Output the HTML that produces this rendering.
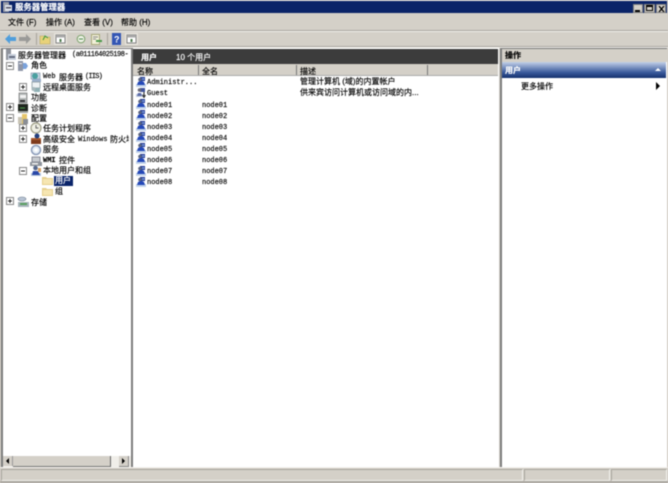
<!DOCTYPE html>
<html><head><meta charset="utf-8"><style>
*{box-sizing:border-box}
html{background:#d4d0c8}
html,body{margin:0;padding:0;width:668px;height:483px;overflow:hidden}
body{position:relative;background:#d4d0c8;font-family:"Liberation Sans","Noto Sans CJK SC",sans-serif;font-size:8px;color:#000;filter:blur(.45px)}
.a{position:absolute}
.t{position:absolute;white-space:nowrap;line-height:11px;height:11px;-webkit-text-stroke:.15px currentColor}
.m{font-family:"Liberation Mono","Noto Sans CJK SC",monospace;font-size:7px}
.c{font-size:8px}
svg{position:absolute;display:block}
</style></head><body>
<svg width="0" height="0" style="left:0;top:0"><defs>
<symbol id="u" viewBox="0 0 11 11"><rect x="4" y="1" width="5" height="4" fill="#1f3590"/><rect x="6" y="2" width="2.500000" height="2" fill="#6f8fd0"/><rect x="0" y="8" width="10" height="3" fill="#c3d4ea"/><path d="M1 9l1-3 2-1h2l2 1 1 3z" fill="#2448b8"/><circle cx="4" cy="3.500000" r="1.800000" fill="#5a6480"/></symbol>
<symbol id="g" viewBox="0 0 11 11"><rect x="4" y="1" width="5" height="4" fill="#41549c"/><rect x="0" y="7" width="8" height="3" fill="#c4cfe2"/><circle cx="3.500000" cy="3" r="1.800000" fill="#6a6a78"/><path d="M1 9l1-3h3l1 3z" fill="#5a6aa8"/><path d="M8 5v4M6.500000 8l1.500000 2.500000L9.500000 8" stroke="#222" fill="none"/></symbol>
<symbol id="f" viewBox="0 0 11 9"><path d="M0 1h4l1 1h6v7H0z" fill="#e6cf8c"/><path d="M1 3h9v5H1z" fill="#f6e6b2"/></symbol>
<symbol id="p" viewBox="0 0 8 8"><rect x=".5" y=".5" width="7" height="7" fill="#fff" stroke="#888"/><path d="M2 4h4M4 2v4" stroke="#222"/></symbol>
<symbol id="n" viewBox="0 0 8 8"><rect x=".5" y=".5" width="7" height="7" fill="#fff" stroke="#888"/><path d="M2 4h4" stroke="#222"/></symbol>
<symbol id="w" viewBox="0 0 13 12"><rect x="0" y="0" width="13" height="12" fill="#e6e3dc"/><rect x="2" y="2" width="9" height="8" fill="#fff" stroke="#808080"/><rect x="2" y="2" width="9" height="2.500000" fill="#a8a8a8"/><rect x="5.500000" y="6" width="2" height="3" fill="#4e7a4e"/></symbol>
</defs></svg>

<!-- title bar -->
<div class="a" style="left:0;top:0;width:668px;height:1px;background:#e8e6e0"></div>
<div class="a" style="left:1px;top:1px;width:666px;height:12px;background:#0b2468"></div>
<svg style="left:3px;top:2px" width="9" height="10"><rect x="0" y="0" width="6" height="10" fill="#9a9ea8"/><rect x="2" y="3" width="7" height="6" fill="#dfe4ec"/><rect x="3" y="5" width="5" height="1.500000" fill="#556"/></svg>
<div class="t" style="left:15px;top:2px;color:#fff;font-size:8.4px;font-weight:bold">服务器管理器</div>
<div class="a" style="left:633px;top:4px;width:10px;height:9px;background:#d4d0c8;border:1px solid #808080"><div class="a" style="left:1px;bottom:0;width:5px;height:2px;background:#000"></div></div>
<div class="a" style="left:644px;top:4px;width:11px;height:9px;background:#d4d0c8;border:1px solid #808080"><div class="a" style="left:1px;top:0;width:7px;height:6px;border:1px solid #000;border-top-width:2px"></div></div>
<div class="a" style="left:656px;top:4px;width:10px;height:9px;background:#d4d0c8;border:1px solid #808080"><svg style="left:1px;top:1px" width="7" height="6"><path d="M1 0l5 6M6 0L1 6" stroke="#000" stroke-width="1.300000"/></svg></div>

<!-- menu -->
<div class="t c" style="left:8px;top:17px">文件 (F)</div>
<div class="t c" style="left:46px;top:17px">操作 (A)</div>
<div class="t c" style="left:84px;top:17px">查看 (V)</div>
<div class="t c" style="left:121px;top:17px">帮助 (H)</div>
<div class="a" style="left:0;top:30px;width:668px;height:1px;background:#a9a69f"></div>
<div class="a" style="left:0;top:31px;width:668px;height:1px;background:#f2f0ec"></div>

<!-- toolbar -->
<svg style="left:4px;top:32px" width="140" height="14">
<path d="M1 7l5-5v3h6v4H6v3z" fill="#4f9edc"/>
<path d="M27 7l-5-5v3h-7v4h7v3z" fill="#9a9a98"/>
<path d="M32.500000 1v12M103.500000 1v12" stroke="#a8a49c"/>
<path d="M36 4h4l1 1h5v7H36z" fill="#e8d27a" stroke="#b8a860" stroke-width=".6"/>
<path d="M39 8l2-4 3 2" stroke="#3a9a3a" fill="none"/>
<use href="#w" x="50" y="1" width="13" height="12"/>
<circle cx="77" cy="7" r="3.800000" fill="#eef2e6" stroke="#7aa06a"/><path d="M75 7h4" stroke="#4c8a4c"/>
<rect x="87.500000" y="2.500000" width="8" height="10" fill="#f2f0d8" stroke="#a8a87a"/><path d="M89 5h5M89 7h3" stroke="#888"/><path d="M92 9h6" stroke="#4c9a4c" stroke-width="2"/>
<rect x="108" y="1" width="9" height="12" fill="#3456b4"/><text x="110" y="10.500000" font-family="Liberation Sans" font-size="9" font-weight="bold" fill="#fff">?</text>
<use href="#w" x="121" y="1" width="13" height="12"/>
</svg>
<div class="a" style="left:0;top:46px;width:668px;height:1px;background:#a9a69f"></div>
<div class="a" style="left:0;top:47px;width:668px;height:1px;background:#f2f0ec"></div>

<!-- left pane -->
<div class="a" style="left:1px;top:48px;width:132px;height:419px;background:#fff;border-left:2px solid #7c7c7c;border-right:2px solid #7c7c7c;border-top:1px solid #777"></div>

<svg style="left:5px;top:49px" width="12" height="12"><rect x="1" y="0" width="5" height="11" fill="#8f939c"/><rect x="3" y="5" width="8" height="6" fill="#c9d0dc"/><rect x="4" y="7" width="6" height="2" fill="#666e80"/></svg>
<div class="t c" style="left:18px;top:50px">服务器管理器</div>
<div class="t m" style="left:72px;top:50px;letter-spacing:-.45px">(a011164025198-</div>

<svg style="left:6px;top:62px" width="8" height="8"><use href="#n"/></svg>
<svg style="left:17px;top:60px" width="12" height="12"><rect x="1" y="1" width="5" height="10" fill="#8f96a8"/><rect x="2" y="3" width="3" height="1" fill="#eee"/><path d="M6 3h3l2 3-2 3H6z" fill="#7aa2dc"/></svg>
<div class="t c" style="left:31px;top:60px">角色</div>

<svg style="left:30px;top:71px" width="12" height="12"><rect x="1" y="2" width="9" height="6" fill="#c9d6e4" stroke="#7a8aa0" stroke-width=".6"/><circle cx="5" cy="5" r="3" fill="#4aa0a0"/><rect x="2" y="8" width="9" height="3" fill="#9ab0cc"/></svg>
<div class="t m" style="left:43px;top:72px">Web</div>
<div class="t c" style="left:59px;top:72px">服务器</div>
<div class="t m" style="left:85px;top:72px;letter-spacing:-.8px">(IIS)</div>

<svg style="left:19px;top:83px" width="8" height="8"><use href="#p"/></svg>
<svg style="left:30px;top:81px" width="12" height="12"><rect x="2" y="1" width="8" height="6" fill="#eef2f4" stroke="#8a9aa0" stroke-width=".8"/><rect x="4" y="7" width="6" height="4" fill="#8fb0b4"/><circle cx="3.500000" cy="8" r="2" fill="#a8b8bc"/></svg>
<div class="t c" style="left:43px;top:82px">远程桌面服务</div>

<svg style="left:17px;top:92px" width="12" height="12"><rect x="2" y="1" width="8" height="10" fill="#b4b8b8" stroke="#666" stroke-width=".6"/><rect x="3" y="3" width="6" height="3" fill="#f2f2f2"/><rect x="3" y="8" width="5" height="2" fill="#333"/></svg>
<div class="t c" style="left:31px;top:92px">功能</div>

<svg style="left:6px;top:103px" width="8" height="8"><use href="#p"/></svg>
<svg style="left:17px;top:103px" width="12" height="11"><rect x="1" y="1" width="10" height="7" fill="#20261f"/><path d="M3 5h5" stroke="#4ea04e"/><rect x="1" y="8" width="10" height="2" fill="#a0a4a0"/></svg>
<div class="t c" style="left:31px;top:103px">诊断</div>

<svg style="left:6px;top:114px" width="8" height="8"><use href="#n"/></svg>
<svg style="left:17px;top:113px" width="12" height="12"><rect x="1" y="4" width="4" height="7" fill="#c8c4b4"/><rect x="5" y="1" width="5" height="10" fill="#e6c66c"/><rect x="6" y="6" width="5" height="5" fill="#8a8e96"/></svg>
<div class="t c" style="left:31px;top:113px">配置</div>

<svg style="left:19px;top:124px" width="8" height="8"><use href="#p"/></svg>
<svg style="left:30px;top:122px" width="12" height="12"><circle cx="6" cy="6" r="5" fill="#f0f0e4" stroke="#a0a088" stroke-width="1.200000"/><path d="M6 3v3h2.500000" stroke="#666" fill="none"/></svg>
<div class="t c" style="left:43px;top:123px">任务计划程序</div>

<svg style="left:19px;top:135px" width="8" height="8"><use href="#p"/></svg>
<svg style="left:30px;top:133px" width="12" height="12"><rect x="1" y="5" width="10" height="6" fill="#7e3a1c"/><rect x="1" y="5" width="10" height="2" fill="#a85a2c"/><circle cx="7" cy="3" r="2.500000" fill="#24407c"/></svg>
<div class="t c" style="left:43px;top:134px">高级安全</div>
<div class="t m" style="left:78px;top:135px">Windows</div>
<div class="t c" style="left:110px;top:134px;width:19px;overflow:hidden">防火墙</div>

<svg style="left:30px;top:144px" width="13" height="12"><circle cx="6" cy="6" r="4.500000" fill="#e4ecf4" stroke="#8a9ab8" stroke-width="1.500000"/><circle cx="6" cy="6" r="1.800000" fill="#fff"/></svg>
<div class="t c" style="left:43px;top:144px">服务</div>

<svg style="left:30px;top:155px" width="12" height="12"><rect x="2" y="2" width="8" height="5" fill="#c8ccd0" stroke="#667" stroke-width=".7"/><rect x="0" y="7" width="12" height="4" fill="#8e949c"/><rect x="2" y="8" width="6" height="1.500000" fill="#eee"/></svg>
<div class="t m" style="left:43px;top:156px;font-weight:bold">WMI</div>
<div class="t c" style="left:59px;top:155px">控件</div>

<svg style="left:19px;top:167px" width="8" height="8"><use href="#n"/></svg>
<svg style="left:30px;top:165px" width="12" height="12"><rect x="1" y="8" width="10" height="3" fill="#b8c8dc"/><path d="M2 10l1-4h5l2 4z" fill="#2a48a8"/><circle cx="5.500000" cy="3" r="2.300000" fill="#56688c"/><rect x="8" y="3" width="3" height="4" fill="#d8a060"/></svg>
<div class="t c" style="left:43px;top:165px">本地用户和组</div>

<svg style="left:42px;top:176px" width="11" height="9"><use href="#f"/></svg>
<div class="a" style="left:54px;top:176px;width:19px;height:10px;background:#0a246a"></div>
<div class="t c" style="left:55px;top:175px;color:#fff">用户</div>
<svg style="left:42px;top:187px" width="11" height="9"><use href="#f"/></svg>
<div class="t c" style="left:55px;top:186px">组</div>

<svg style="left:6px;top:197px" width="8" height="8"><use href="#p"/></svg>
<svg style="left:17px;top:196px" width="13" height="12"><ellipse cx="5" cy="3" rx="4" ry="2" fill="#b8c4d4" stroke="#6a7a8c" stroke-width=".6"/><rect x="1" y="6" width="11" height="5" fill="#a8b4bc"/><rect x="3" y="7" width="7" height="2" fill="#5aa060"/></svg>
<div class="t c" style="left:31px;top:197px">存储</div>

<!-- left scrollbar -->
<div class="a" style="left:3px;top:456px;width:128px;height:11px;background:#f0eee9"></div>
<div class="a" style="left:3px;top:456px;width:10px;height:10px;background:#d4d0c8;border-right:1px solid #999"></div>
<div class="a" style="left:6px;top:458px;border:3px solid transparent;border-left:0;border-right:3px solid #000"></div>
<div class="a" style="left:13px;top:456px;width:98px;height:11px;background:#d4d0c8;border-right:1px solid #666;border-bottom:1px solid #777"></div>
<div class="a" style="left:119px;top:456px;width:10px;height:11px;background:#d4d0c8;border-right:1px solid #888;border-bottom:1px solid #888"></div>
<div class="a" style="left:122px;top:458px;border:3px solid transparent;border-right:0;border-left:3px solid #000"></div>

<!-- center pane -->
<div class="a" style="left:133px;top:48px;width:366px;height:419px;background:#fff"></div>
<div class="a" style="left:133px;top:49px;width:365px;height:15px;background:#3c3c3c"></div>
<div class="t c" style="left:141px;top:52px;color:#fff;font-weight:bold">用户</div>
<div class="t c" style="left:176px;top:52px;color:#fff">10 个用户</div>
<div class="a" style="left:133px;top:64px;width:365px;height:12px;background:#d4d0c8;border-bottom:1px solid #aaa"></div>
<div class="a" style="left:198px;top:65px;width:1px;height:10px;background:#777"></div>
<div class="a" style="left:296px;top:65px;width:1px;height:10px;background:#777"></div>
<div class="a" style="left:427px;top:65px;width:1px;height:10px;background:#777"></div>
<div class="t c" style="left:137px;top:66px">名称</div>
<div class="t c" style="left:202px;top:66px">全名</div>
<div class="t c" style="left:300px;top:66px">描述</div>

<svg style="left:136px;top:76px" width="11" height="11"><use href="#u"/></svg><div class="t m" style="left:147px;top:78px">Administr...</div>
<div class="t c" style="left:300px;top:76px">管理计算机 (域)的内置帐户</div>
<svg style="left:136px;top:87px" width="11" height="11"><use href="#g"/></svg><div class="t m" style="left:147px;top:89px">Guest</div>
<div class="t c" style="left:300px;top:87px">供来宾访问计算机或访问域的内...</div>
<svg style="left:136px;top:98px" width="11" height="11"><use href="#u"/></svg><div class="t m" style="left:147px;top:101px">node01</div><div class="t m" style="left:202px;top:101px">node01</div>
<svg style="left:136px;top:109px" width="11" height="11"><use href="#u"/></svg><div class="t m" style="left:147px;top:112px">node02</div><div class="t m" style="left:202px;top:112px">node02</div>
<svg style="left:136px;top:120px" width="11" height="11"><use href="#u"/></svg><div class="t m" style="left:147px;top:123px">node03</div><div class="t m" style="left:202px;top:123px">node03</div>
<svg style="left:136px;top:131px" width="11" height="11"><use href="#u"/></svg><div class="t m" style="left:147px;top:134px">node04</div><div class="t m" style="left:202px;top:134px">node04</div>
<svg style="left:136px;top:142px" width="11" height="11"><use href="#u"/></svg><div class="t m" style="left:147px;top:145px">node05</div><div class="t m" style="left:202px;top:145px">node05</div>
<svg style="left:136px;top:153px" width="11" height="11"><use href="#u"/></svg><div class="t m" style="left:147px;top:156px">node06</div><div class="t m" style="left:202px;top:156px">node06</div>
<svg style="left:136px;top:165px" width="11" height="11"><use href="#u"/></svg><div class="t m" style="left:147px;top:167px">node07</div><div class="t m" style="left:202px;top:167px">node07</div>
<svg style="left:136px;top:176px" width="11" height="11"><use href="#u"/></svg><div class="t m" style="left:147px;top:178px">node08</div><div class="t m" style="left:202px;top:178px">node08</div>

<!-- right pane -->
<div class="a" style="left:500px;top:48px;width:167px;height:419px;background:#fff;border-left:2px solid #7c7c7c;border-top:1px solid #777"></div>
<div class="a" style="left:502px;top:49px;width:165px;height:13px;background:#d4d0c8"></div>
<div class="t c" style="left:505px;top:50px;font-weight:bold">操作</div>
<div class="a" style="left:502px;top:62px;width:164px;height:16px;background:linear-gradient(#c2d0e8,#3a5a9c 65%,#14306e)"></div>
<div class="t c" style="left:505px;top:65px;color:#fff;font-weight:bold">用户</div>
<div class="a" style="left:655px;top:68px;border:3px solid transparent;border-top:0;border-bottom:3px solid #fff"></div>
<div class="t c" style="left:521px;top:81px">更多操作</div>
<div class="a" style="left:656px;top:82px;border:4px solid transparent;border-right:0;border-left:4px solid #000"></div>

<!-- status bar -->
<div class="a" style="left:0;top:467px;width:668px;height:16px;background:#d4d0c8;border-top:1px solid #f4f2ee"></div>
<div class="a" style="left:1px;top:469px;width:522px;height:12px;border:1px solid;border-color:#a8a59e #f2f0ec #f2f0ec #a8a59e"></div>
<div class="a" style="left:524px;top:469px;width:86px;height:12px;border:1px solid;border-color:#a8a59e #f2f0ec #f2f0ec #a8a59e"></div>
<div class="a" style="left:611px;top:469px;width:56px;height:12px;border:1px solid;border-color:#a8a59e #f2f0ec #f2f0ec #a8a59e"></div>
<div class="a" style="left:0;top:481px;width:668px;height:2px;background:#a9a69f"></div>
</body></html>
